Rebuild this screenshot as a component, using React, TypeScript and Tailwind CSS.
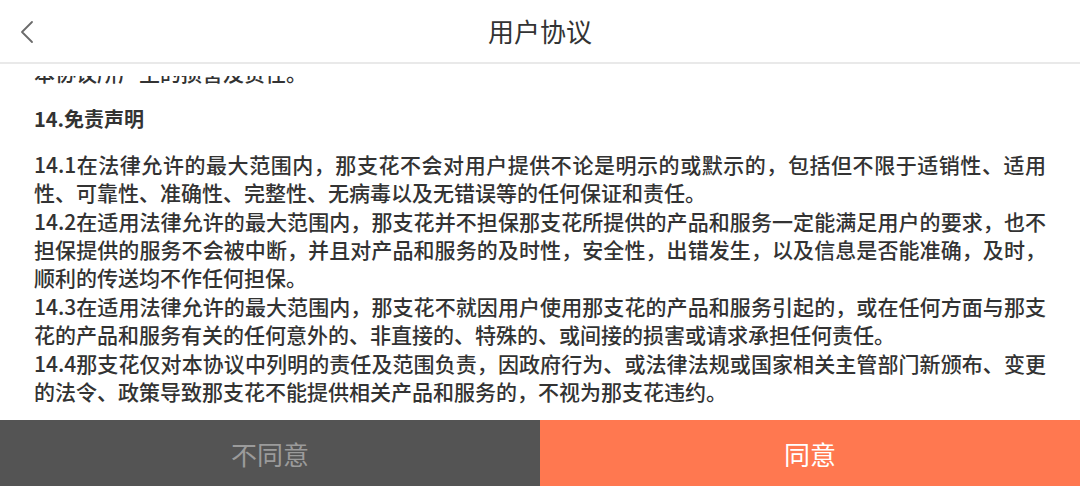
import { ChevronLeft } from 'lucide-react';

const clauses = [
  '14.1在法律允许的最大范围内，那支花不会对用户提供不论是明示的或默示的，包括但不限于适销性、适用性、可靠性、准确性、完整性、无病毒以及无错误等的任何保证和责任。',
  '14.2在适用法律允许的最大范围内，那支花并不担保那支花所提供的产品和服务一定能满足用户的要求，也不担保提供的服务不会被中断，并且对产品和服务的及时性，安全性，出错发生，以及信息是否能准确，及时，顺利的传送均不作任何担保。',
  '14.3在适用法律允许的最大范围内，那支花不就因用户使用那支花的产品和服务引起的，或在任何方面与那支花的产品和服务有关的任何意外的、非直接的、特殊的、或间接的损害或请求承担任何责任。',
  '14.4那支花仅对本协议中列明的责任及范围负责，因政府行为、或法律法规或国家相关主管部门新颁布、变更的法令、政策导致那支花不能提供相关产品和服务的，不视为那支花违约。',
];

const Header = ({ title }: { title: string }) => (
  <div className="relative flex h-[64px] shrink-0 items-center justify-center border-b-2 border-[#e9e9e9] bg-white">
    <button type="button" className="absolute left-[7px] top-[12px] text-[#6b6b6b]">
      <ChevronLeft size={40} strokeWidth={1.1} />
    </button>
    <h1 className="text-[26px] font-normal leading-none text-[#333]">{title}</h1>
  </div>
);

export default function App() {
  return (
    <div
      className="flex h-[486px] w-[1080px] flex-col overflow-hidden bg-white"
      style={{ fontFamily: '"Noto Sans CJK SC", "Noto Sans", sans-serif' }}
    >
      <Header title="用户协议" />
      <div className="h-[12px] shrink-0 bg-white" />

      {/* scrolled agreement body */}
      <div className="flex-1 overflow-hidden px-[34px] text-[21px] font-medium leading-[28.4px] text-[#333]">
        <div className="-mt-[18px]">
          <p className="mb-[19px] text-justify">本协议所产生的损害及责任。</p>
          <h2 className="mb-[16px] text-[20px] font-bold leading-[28.4px]">14.免责声明</h2>
          {clauses.map((c) => (
            <p key={c} className="text-justify">
              {c}
            </p>
          ))}
        </div>
      </div>

      <div className="flex h-[66px] shrink-0">
        <button
          type="button"
          className="flex flex-1 items-center justify-center bg-[#545454] text-[26px] font-normal text-[#9b9b9b]"
        >
          不同意
        </button>
        <button
          type="button"
          className="flex flex-1 items-center justify-center bg-[#ff7850] text-[26px] font-normal text-white"
        >
          同意
        </button>
      </div>
    </div>
  );
}
